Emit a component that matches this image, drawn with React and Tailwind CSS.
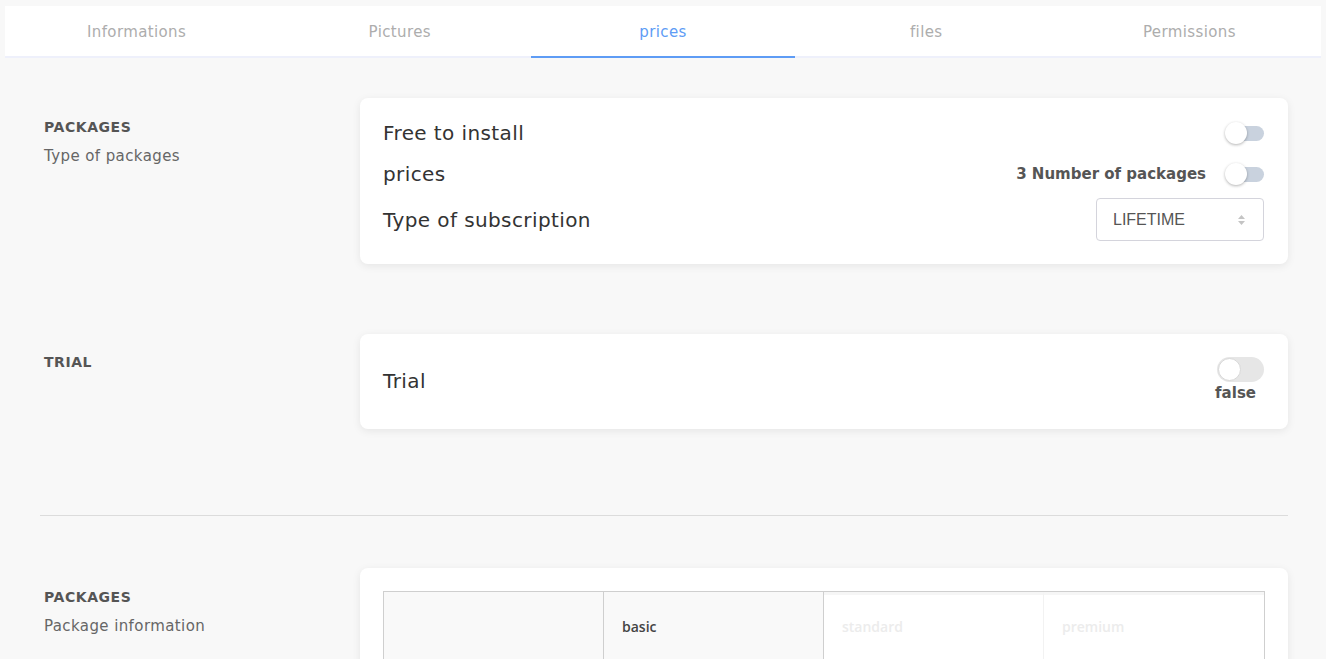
import { useState } from 'react'

const tabs = ['Informations', 'Pictures', 'prices', 'files', 'Permissions']

function Switch({ on, onChange }) {
  // material-like switch: thin track, big knob
  return (
    <button
      onClick={() => onChange(!on)}
      className="relative w-[40px] h-[24px] flex items-center"
    >
      <span className={'block ml-[5px] w-[35px] h-[15px] rounded-full ' + (on ? 'bg-[#9dbdf2]' : 'bg-[#c9d2de]')} />
      <span
        className={
          'absolute top-[1px] w-[22px] h-[22px] rounded-full shadow-[0_1px_3px_rgba(0,0,0,0.3)] transition-all ' +
          (on ? 'left-[18px] bg-[#5e9cf5]' : 'left-[1px] bg-white')
        }
      />
    </button>
  )
}

function BigSwitch({ on, onChange }) {
  return (
    <button
      onClick={() => onChange(!on)}
      className={'relative w-[47px] h-[25px] rounded-full ' + (on ? 'bg-[#5e9cf5]' : 'bg-[#e6e6e6]')}
    >
      <span
        className={
          'absolute top-[1px] w-[23px] h-[23px] rounded-full bg-white border border-[#d8d8d8] transition-all ' +
          (on ? 'left-[23px]' : 'left-[1px]')
        }
      />
    </button>
  )
}

function SectionLabel({ title, sub }) {
  return (
    <div className="w-[320px] shrink-0 pl-1">
      <div className="text-[14px] font-bold text-[#555] leading-[18px] tracking-[0.04em]">{title}</div>
      {sub && <div className="mt-[11px] text-[15px] text-[#666] leading-[18px]">{sub}</div>}
    </div>
  )
}

export default function App() {
  const [tab, setTab] = useState(2)
  const [free, setFree] = useState(false)
  const [prices, setPrices] = useState(false)
  const [trial, setTrial] = useState(false)
  const [sub, setSub] = useState('LIFETIME')

  return (
    <div className="min-h-[659px] bg-[#f8f8f8] font-['DejaVu_Sans',sans-serif] tracking-[0.025em] pt-[6px]">
      {/* tabs */}
      <div className="mx-[5px] bg-white flex">
        {tabs.map((name, i) => (
          <button
            key={name}
            onClick={() => setTab(i)}
            className={
              'flex-1 h-[52px] pt-[2px] text-[15px] border-b-2 tracking-[0.025em] ' +
              (i === tab ? 'text-[#5e9cf5] border-[#5e9cf5]' : 'text-[#adadad] border-[#eef0fb]')
            }
          >
            {name}
          </button>
        ))}
      </div>

      <div className="pl-10 pr-[38px]">
        {/* packages */}
        <div className="flex mt-[40px]">
          <div className="pt-[20px]">
            <SectionLabel title="PACKAGES" sub="Type of packages" />
          </div>
          <div className="flex-1 bg-white rounded-lg shadow-[0_2px_8px_rgba(0,0,0,0.08)] pl-[23px] pr-[24px] pt-[23px] pb-[23px]">
            <div className="flex items-center justify-between h-[24px]">
              <span className="text-[20px] text-[#333]">Free to install</span>
              <Switch on={free} onChange={setFree} />
            </div>
            <div className="flex items-center justify-between h-[24px] mt-[17px]">
              <span className="text-[20px] text-[#333]">prices</span>
              <div className="flex items-center gap-[18px]">
                <span className="text-[15px] font-bold text-[#555] tracking-normal">3 Number of packages</span>
                <Switch on={prices} onChange={setPrices} />
              </div>
            </div>
            <div className="flex items-center justify-between mt-[12px]">
              <span className="text-[20px] text-[#333]">Type of subscription</span>
              <div className="relative">
                <select
                  value={sub}
                  onChange={(e) => setSub(e.target.value)}
                  className="appearance-none w-[168px] h-[43px] border border-[#d4d4dc] rounded-[4px] pl-4 text-[16px] text-[#555] tracking-normal font-['Liberation_Sans',sans-serif] bg-white"
                >
                  <option>LIFETIME</option>
                  <option>MONTHLY</option>
                  <option>YEARLY</option>
                </select>
                <svg className="absolute right-[18px] top-[16px] pointer-events-none" width="9" height="12" viewBox="0 0 9 12">
                  <path d="M4.5 1 L8 5 H1 Z" fill="#c4c4c4" />
                  <path d="M4.5 11 L8 7 H1 Z" fill="#c4c4c4" />
                </svg>
              </div>
            </div>
          </div>
        </div>

        {/* trial */}
        <div className="flex mt-[70px]">
          <div className="pt-[19px]">
            <SectionLabel title="TRIAL" />
          </div>
          <div className="flex-1 bg-white rounded-lg shadow-[0_2px_8px_rgba(0,0,0,0.08)] pl-[23px] pr-[24px] pt-[23px] pb-[26px] flex items-center justify-between">
            <span className="text-[20px] text-[#333] mt-[2px]">Trial</span>
            <div className="flex flex-col items-end">
              <BigSwitch on={trial} onChange={setTrial} />
              <span className="text-[15px] font-bold text-[#555] leading-[19px] mt-[2px] mr-[8px] tracking-normal">
                {trial ? 'true' : 'false'}
              </span>
            </div>
          </div>
        </div>

        <div className="h-px bg-[#dcdcdc] mt-[86px]" />

        {/* package information */}
        <div className="flex mt-[52px]">
          <div className="pt-[20px]">
            <SectionLabel title="PACKAGES" sub="Package information" />
          </div>
          <div className="flex-1 bg-white rounded-t-lg shadow-[0_2px_8px_rgba(0,0,0,0.08)] px-[23px] pt-[23px] h-[120px]">
            <div className="grid grid-cols-4 border-l border-r border-t border-[#cfcfcf] font-['Open_Sans',sans-serif] tracking-normal text-[14px] h-[100px]">
              <div className="bg-[#f9f9f9] border-r border-[#cfcfcf]" />
              <div className="bg-[#f9f9f9] border-r border-[#cfcfcf] pl-[18px] pt-[24px] font-semibold text-[#444]">basic</div>
              <div className="bg-white border-r border-[#f2f2f2] border-t-[3px] border-t-[#f6f6f6] pl-[18px] pt-[21px] font-semibold text-[#ececec]">standard</div>
              <div className="bg-white border-t-[3px] border-t-[#f6f6f6] pl-[18px] pt-[21px] font-semibold text-[#ececec]">premium</div>
            </div>
          </div>
        </div>
      </div>
    </div>
  )
}
